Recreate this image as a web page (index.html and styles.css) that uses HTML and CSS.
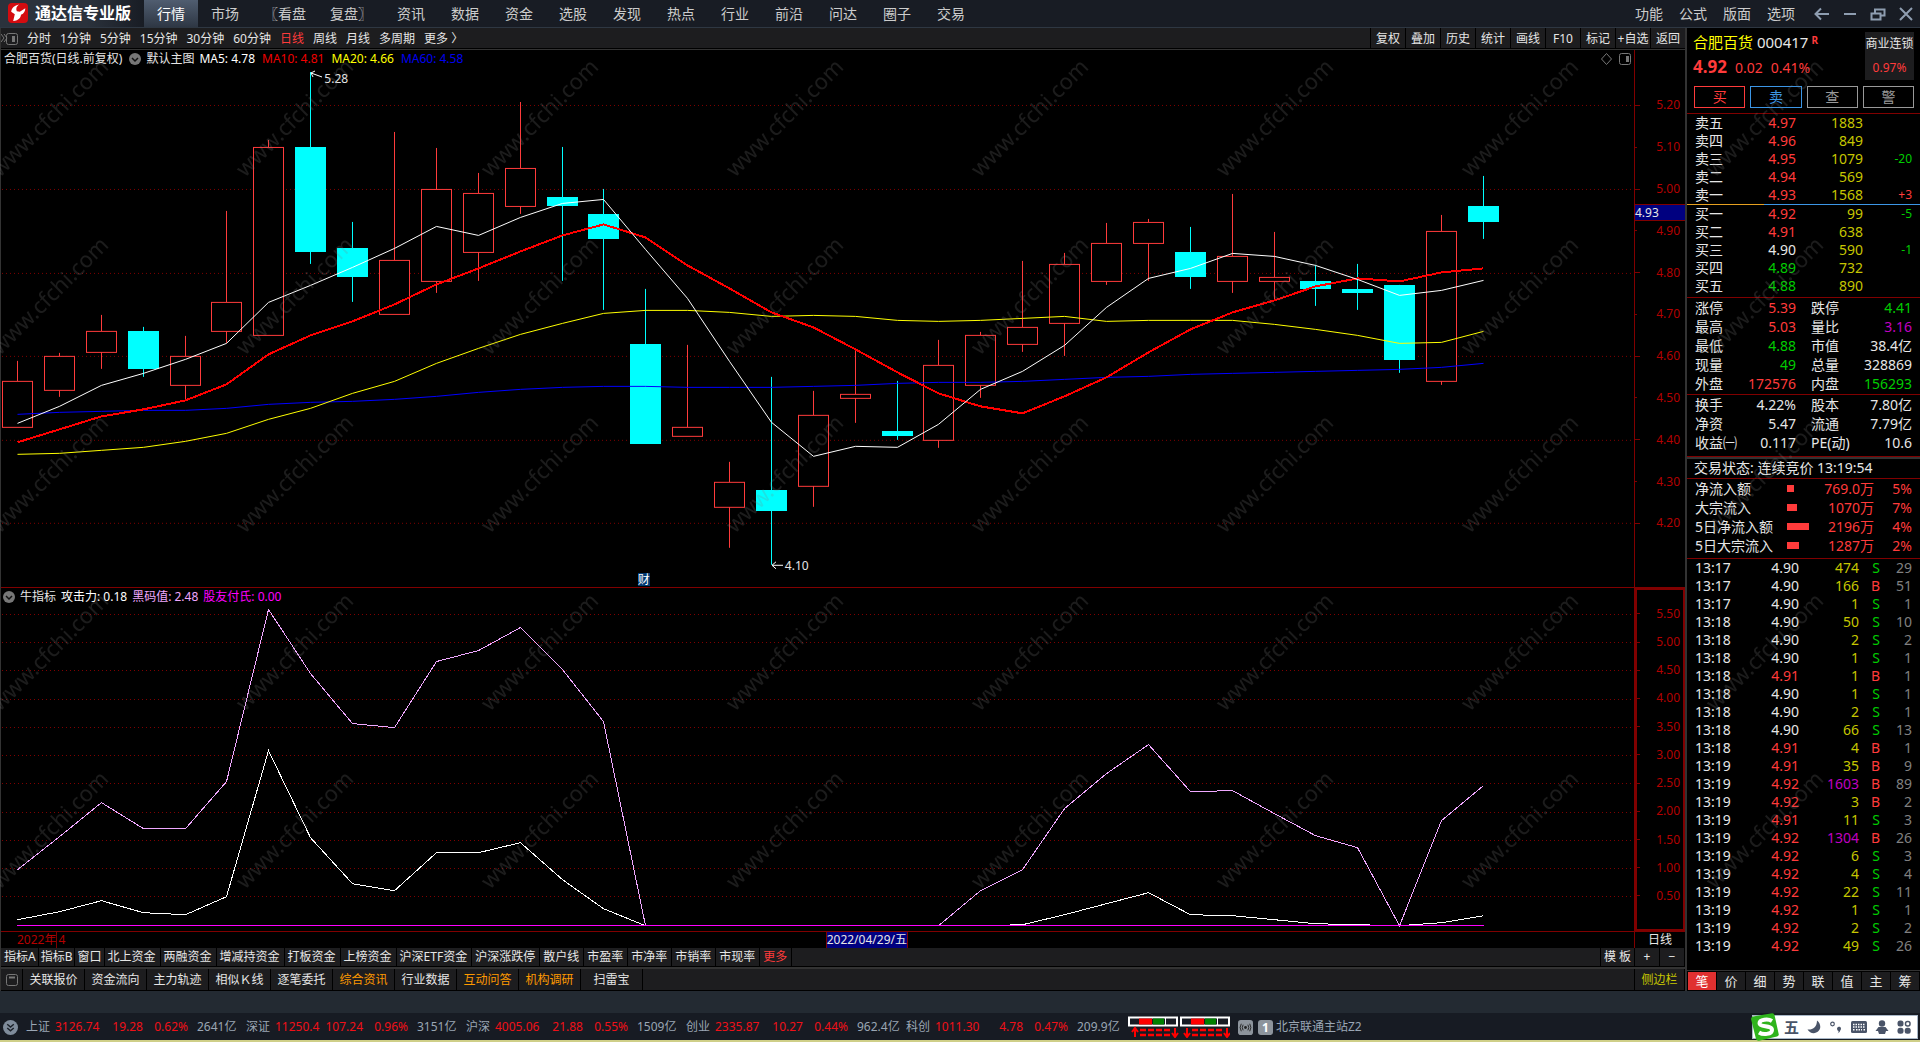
FILE: index.html
```html
<!DOCTYPE html>
<html lang="zh-CN">
<head>
<meta charset="utf-8">
<title>通达信专业版</title>
<link rel="stylesheet" href="styles.css">
</head>
<body>
<header class="topbar">
  <div class="brand">
    <svg class="brand-logo" viewBox="0 0 20 20"><rect width="20" height="20" rx="4" fill="#d40c10"/><path d="M11 1.500C6.500 2.500 3.500 5 3.200 8.800L6.800 11.200L5.200 18C8.500 18.300 12.500 16 13 11.800C16 10.500 17.400 8 17.300 5.200L11.800 8.700L8.800 8.200C7.600 5.500 8.600 3.200 11 1.500Z" fill="#fff"/></svg>
    <h1>通达信专业版</h1>
  </div>
  <nav class="menu">
    <button class="active">行情</button><button>市场</button><button class="wide">〖看盘</button><button class="wide">复盘〗</button><button>资讯</button><button>数据</button><button>资金</button><button>选股</button><button>发现</button><button>热点</button><button>行业</button><button>前沿</button><button>问达</button><button>圈子</button><button>交易</button>
  </nav>
  <nav class="menu-right">
    <button>功能</button><button>公式</button><button>版面</button><button>选项</button>
  </nav>
  <div class="window-buttons">
    <button aria-label="返回"><svg viewBox="0 0 16 16"><path d="M15 8H1.500M7 2.500L1.500 8L7 13.500"/></svg></button>
    <button aria-label="最小化"><svg viewBox="0 0 16 16"><path d="M2 8H14"/></svg></button>
    <button aria-label="还原"><svg viewBox="0 0 16 16"><path d="M1.500 7.500H10.500V13.500H1.500ZM5 7V3.500H14.500V9.500H11"/></svg></button>
    <button aria-label="关闭"><svg viewBox="0 0 16 16"><path d="M2 2L14 14M14 2L2 14"/></svg></button>
  </div>
</header>

<main class="workspace">
  <section class="chart-area">
    <div class="toolbar">
      <svg class="fold-icon" viewBox="0 0 18 14"><path d="M0 2L3 6L0 10M3 2L6 6L3 10" /><rect x="5.500" y="1.500" width="11" height="11" rx="2"/><path d="M12.500 4V10" stroke-width="3"/></svg>
      <div class="periods">
        <button>分时</button><button>1分钟</button><button>5分钟</button><button>15分钟</button><button>30分钟</button><button>60分钟</button><button class="active">日线</button><button>周线</button><button>月线</button><button>多周期</button><button>更多 〉</button>
      </div>
      <div class="tools">
        <button>复权</button><button>叠加</button><button>历史</button><button>统计</button><button>画线</button><button>F10</button><button>标记</button><button>+自选</button><button>返回</button>
      </div>
    </div>

    <div class="pane price-pane">
      <div class="plot">
        <svg id="price" viewBox="1 50 1633 537" preserveAspectRatio="none"></svg>
        <div class="legend">
          <span>合肥百货(日线.前复权)</span>
          <svg class="drop" viewBox="0 0 12 12"><circle cx="6" cy="6" r="6" fill="#777"/><path d="M3 5L6 8L9 5" fill="none" stroke="#111" stroke-width="1.500"/></svg>
          <span>默认主图</span><span class="ma5">MA5: 4.78</span><span class="ma10">MA10: 4.81</span><span class="ma20">MA20: 4.66</span><span class="ma60">MA60: 4.58</span>
        </div>
        <svg class="corner" viewBox="0 0 32 14"><path d="M6.500 1.500L11.500 7L6.500 12.500L1.500 7Z"/><rect x="19.500" y="1.500" width="11" height="11" rx="2"/><path d="M27.500 4V10" stroke-width="3"/></svg>
        <span class="note high">5.28</span>
        <span class="note low">4.10</span>
        <span class="event">财</span>
      </div>
      <ol class="axis price-axis">
        <li>5.20</li><li>5.10</li><li>5.00</li><li>4.90</li><li>4.80</li><li>4.70</li><li>4.60</li><li>4.50</li><li>4.40</li><li>4.30</li><li>4.20</li>
      </ol>
      <span class="cursor-price">4.93</span>
    </div>

    <div class="pane index-pane">
      <div class="plot">
        <svg id="index" viewBox="1 588 1633 343" preserveAspectRatio="none"></svg>
        <div class="legend">
          <svg class="drop" viewBox="0 0 12 12"><circle cx="6" cy="6" r="6" fill="#777"/><path d="M3 5L6 8L9 5" fill="none" stroke="#111" stroke-width="1.500"/></svg>
          <span>牛指标</span><span class="ma5">攻击力: 0.18</span><span class="pink">黑码值: 2.48</span><span class="magenta">股友付氏: 0.00</span>
        </div>
      </div>
      <ol class="axis index-axis">
        <li>5.50</li><li>5.00</li><li>4.50</li><li>4.00</li><li>3.50</li><li>3.00</li><li>2.50</li><li>2.00</li><li>1.50</li><li>1.00</li><li>0.50</li>
      </ol>
    </div>

    <div class="dates">
      <div class="date-track"><span class="year">2022年</span><span class="month">4</span><span class="cursor-date">2022/04/29/五</span></div>
      <span class="period">日线</span>
    </div>

    <div class="tabs indicators">
      <button class="tight">指标A</button><button class="tight">指标B</button><button class="tight">窗口</button><button>北上资金</button><button>两融资金</button><button>增减持资金</button><button>打板资金</button><button>上榜资金</button><button>沪深ETF资金</button><button>沪深涨跌停</button><button>散户线</button><button>市盈率</button><button>市净率</button><button>市销率</button><button>市现率</button><button class="active">更多</button>
      <button class="push">模 板</button><button class="zoom">+</button><button class="zoom">−</button>
    </div>
    <div class="tabs links">
      <button class="panel-toggle" aria-label="面板"><svg viewBox="0 0 12 12"><rect x=".5" y=".5" width="11" height="11" rx="2"/><path d="M3 3.500H9" stroke-width="2"/></svg></button><button>关联报价</button><button>资金流向</button><button>主力轨迹</button><button>相似Ｋ线</button><button>逐笔委托</button><button class="hot">综合资讯</button><button>行业数据</button><button class="hot">互动问答</button><button class="hot">机构调研</button><button>扫雷宝</button>
      <button class="push side">侧边栏</button>
    </div>
  </section>

  <aside class="quote">
    <div class="quote-head">
      <div>
        <h2><span class="name">合肥百货</span> 000417<sup>R</sup></h2>
        <p class="last"><strong>4.92</strong><span>0.02</span><span>0.41%</span></p>
      </div>
      <div class="sector"><span>商业连锁</span><span class="up">0.97%</span></div>
    </div>
    <div class="actions"><button class="buy">买</button><button class="sell">卖</button><button>查</button><button>警</button></div>

    <table class="book asks">
      <tr><th>卖五</th><td class="up">4.97</td><td class="vol">1883</td><td></td></tr>
      <tr><th>卖四</th><td class="up">4.96</td><td class="vol">849</td><td></td></tr>
      <tr><th>卖三</th><td class="up">4.95</td><td class="vol">1079</td><td class="down">-20</td></tr>
      <tr><th>卖二</th><td class="up">4.94</td><td class="vol">569</td><td></td></tr>
      <tr><th>卖一</th><td class="up">4.93</td><td class="vol">1568</td><td class="up">+3</td></tr>
    </table>
    <table class="book bids">
      <tr><th>买一</th><td class="up">4.92</td><td class="vol">99</td><td class="down">-5</td></tr>
      <tr><th>买二</th><td class="up">4.91</td><td class="vol">638</td><td></td></tr>
      <tr><th>买三</th><td>4.90</td><td class="vol">590</td><td class="down">-1</td></tr>
      <tr><th>买四</th><td class="down">4.89</td><td class="vol">732</td><td></td></tr>
      <tr><th>买五</th><td class="down">4.88</td><td class="vol">890</td><td></td></tr>
    </table>
    <table class="facts prices">
      <tr><th>涨停</th><td class="up">5.39</td><th>跌停</th><td class="down">4.41</td></tr>
      <tr><th>最高</th><td class="up">5.03</td><th>量比</th><td class="big">3.16</td></tr>
      <tr><th>最低</th><td class="down">4.88</td><th>市值</th><td>38.4亿</td></tr>
      <tr><th>现量</th><td class="down">49</td><th>总量</th><td>328869</td></tr>
      <tr><th>外盘</th><td class="up">172576</td><th>内盘</th><td class="down">156293</td></tr>
    </table>
    <table class="facts company">
      <tr><th>换手</th><td>4.22%</td><th>股本</th><td>7.80亿</td></tr>
      <tr><th>净资</th><td>5.47</td><th>流通</th><td>7.79亿</td></tr>
      <tr><th>收益㈠</th><td>0.117</td><th>PE(动)</th><td>10.6</td></tr>
    </table>
    <p class="state">交易状态: 连续竞价 13:19:54</p>
    <table class="flows">
      <tr><th>净流入额</th><td><i class="bar" style="width:7px"></i></td><td>769.0万</td><td>5%</td></tr>
      <tr><th>大宗流入</th><td><i class="bar" style="width:10px"></i></td><td>1070万</td><td>7%</td></tr>
      <tr><th>5日净流入额</th><td><i class="bar" style="width:22px"></i></td><td>2196万</td><td>4%</td></tr>
      <tr><th>5日大宗流入</th><td><i class="bar" style="width:12px"></i></td><td>1287万</td><td>2%</td></tr>
    </table>
    <table class="ticks">
      <tr><th>13:17</th><td>4.90</td><td class="vol">474</td><td class="down">S</td><td>29</td></tr>
      <tr><th>13:17</th><td>4.90</td><td class="vol">166</td><td class="up">B</td><td>51</td></tr>
      <tr><th>13:17</th><td>4.90</td><td class="vol">1</td><td class="down">S</td><td>1</td></tr>
      <tr><th>13:18</th><td>4.90</td><td class="vol">50</td><td class="down">S</td><td>10</td></tr>
      <tr><th>13:18</th><td>4.90</td><td class="vol">2</td><td class="down">S</td><td>2</td></tr>
      <tr><th>13:18</th><td>4.90</td><td class="vol">1</td><td class="down">S</td><td>1</td></tr>
      <tr><th>13:18</th><td class="up">4.91</td><td class="vol">1</td><td class="up">B</td><td>1</td></tr>
      <tr><th>13:18</th><td>4.90</td><td class="vol">1</td><td class="down">S</td><td>1</td></tr>
      <tr><th>13:18</th><td>4.90</td><td class="vol">2</td><td class="down">S</td><td>1</td></tr>
      <tr><th>13:18</th><td>4.90</td><td class="vol">66</td><td class="down">S</td><td>13</td></tr>
      <tr><th>13:18</th><td class="up">4.91</td><td class="vol">4</td><td class="up">B</td><td>1</td></tr>
      <tr><th>13:19</th><td class="up">4.91</td><td class="vol">35</td><td class="up">B</td><td>9</td></tr>
      <tr><th>13:19</th><td class="up">4.92</td><td class="big">1603</td><td class="up">B</td><td>89</td></tr>
      <tr><th>13:19</th><td class="up">4.92</td><td class="vol">3</td><td class="up">B</td><td>2</td></tr>
      <tr><th>13:19</th><td class="up">4.91</td><td class="vol">11</td><td class="down">S</td><td>3</td></tr>
      <tr><th>13:19</th><td class="up">4.92</td><td class="big">1304</td><td class="up">B</td><td>26</td></tr>
      <tr><th>13:19</th><td class="up">4.92</td><td class="vol">6</td><td class="down">S</td><td>3</td></tr>
      <tr><th>13:19</th><td class="up">4.92</td><td class="vol">4</td><td class="down">S</td><td>4</td></tr>
      <tr><th>13:19</th><td class="up">4.92</td><td class="vol">22</td><td class="down">S</td><td>11</td></tr>
      <tr><th>13:19</th><td class="up">4.92</td><td class="vol">1</td><td class="down">S</td><td>1</td></tr>
      <tr><th>13:19</th><td class="up">4.92</td><td class="vol">2</td><td class="down">S</td><td>2</td></tr>
      <tr><th>13:19</th><td class="up">4.92</td><td class="vol">49</td><td class="down">S</td><td>26</td></tr>
    </table>
    <nav class="quote-tabs"><button class="active">笔</button><button>价</button><button>细</button><button>势</button><button>联</button><button>值</button><button>主</button><button>筹</button></nav>
  </aside>

  <svg class="watermark" aria-hidden="true">
    <defs><pattern id="mark" x="-14" y="28" width="245" height="178" patternUnits="userSpaceOnUse"><text x="14" y="122" transform="rotate(-45 14 122)">www.cfchi.com</text></pattern></defs>
    <rect width="100%" height="100%" fill="url(#mark)"/>
  </svg>
</main>

<footer class="status">
  <svg class="expand" viewBox="0 0 16 16"><circle cx="8" cy="8" r="8" fill="#7f8c9b"/><path d="M4.500 4.500L8 7.500L11.500 4.500M4.500 8.500L8 11.500L11.500 8.500" fill="none" stroke="#1a2028" stroke-width="1.500"/></svg>
  <div class="market"><span>上证</span><b>3126.74</b><b>19.28</b><b>0.62%</b><span>2641亿</span></div>
  <div class="market"><span>深证</span><b>11250.4</b><b>107.24</b><b>0.96%</b><span>3151亿</span></div>
  <div class="market"><span>沪深</span><b>4005.06</b><b>21.88</b><b>0.55%</b><span>1509亿</span></div>
  <div class="market"><span>创业</span><b>2335.87</b><b>10.27</b><b>0.44%</b><span>962.4亿</span></div>
  <div class="market"><span>科创</span><b>1011.30</b><b>4.78</b><b>0.47%</b><span>209.9亿</span></div>
  <svg class="breadth" viewBox="0 0 102 22">
    <g id="meter"><rect x="1" y="1.500" width="48" height="8" fill="none" stroke="#fff" stroke-width="2"/><path d="M11 2.500H24V8.500H11Z" fill="#f00"/><path d="M25 2.500H36V8.500H25Z" fill="green"/><path d="M37.500 1V10" stroke="#fff"/></g>
    <use href="#meter" x="52"/>
    <path d="M7 21V13M4 16L7 12L10 16M47 12V19M44 17L47 21L50 17M59 12V19M56 17L59 21L62 17M99 12V19M96 17L99 21L102 17" stroke="#f00" stroke-width="2" fill="none"/>
    <path d="M12 14H42M12 19H42M64 14H94M64 19H94" stroke="#f00" stroke-width="2.500" stroke-dasharray="6 2"/>
  </svg>
  <svg class="chip" viewBox="0 0 16 16"><rect width="16" height="16" rx="3" fill="#8d949c"/><circle cx="8" cy="8" r="1.500" fill="#222"/><path d="M5.500 5Q3.500 8 5.500 11M10.500 5Q12.500 8 10.500 11M3.500 4Q1 8 3.500 12M12.500 4Q15 8 12.500 12" stroke="#222" fill="none"/></svg>
  <span class="site-no">1</span><span class="site">北京联通主站Z2</span>
  <div class="ime">
    <svg class="sogou" viewBox="0 0 28 28"><path d="M0 6Q0 4 2 3.500L21 .2Q23 0 23.500 2L27.700 21Q28 23 26 23.500L8 27.800Q5.500 28 5 26Z" fill="#2fb41c"/><path d="M21 8C17 5.500 8.500 6.500 8.500 10.200C8.500 14.500 21 12 21 17C21 21.500 12 22 8 19.500" fill="none" stroke="#fff" stroke-width="4"/></svg>
    <span>五</span>
    <svg viewBox="0 0 14 14"><path d="M10 .5C10 7 6 10 .5 9.500C3 13.500 8 14.500 11.500 11C14.500 8 13.500 3 10 .5Z"/></svg>
    <svg viewBox="0 0 14 14"><circle cx="3.500" cy="4" r="1.800" fill="none" stroke="#4a5468" stroke-width="1.200"/><path d="M8 8.500A2 2 0 1 1 11.500 10Q11 12.500 8.500 13.500Q10 12 9.500 11Q8 10.500 8 8.500Z"/></svg>
    <svg class="keys" viewBox="0 0 16 12"><rect width="16" height="12" rx="1.500"/><path d="M2 3.500H14M2 6H14M2 8.800H3.500M5 8.800H11M12.500 8.800H14" stroke="#fff" stroke-width="1.500" stroke-dasharray="1.500 1"/></svg>
    <svg viewBox="0 0 14 14"><circle cx="7" cy="3.500" r="3.200"/><path d="M3.500 7H10.500L13.500 11H11L10 14H4L3 11H.5Z"/></svg>
    <svg viewBox="0 0 14 14"><rect x=".5" y=".5" width="6" height="6" rx="2.500"/><rect x="8.500" y="1.500" width="4.500" height="4.500" rx="2" fill="none" stroke="#4a5468" stroke-width="1.500"/><rect x=".5" y="7.700" width="6" height="6" rx="2.500"/><rect x="7.700" y="7.700" width="6" height="6" rx="2.500"/></svg>
  </div>
</footer>
<script src="charts.js"></script>
</body>
</html>
```
FILE: styles.css
```css
* { box-sizing: border-box; }
body {
  margin: 0;
  min-height: 100vh;
  display: flex;
  flex-direction: column;
  background: #000;
  color: #e6e6e6;
  font: 12px/16px "Noto Sans", "Noto Sans CJK SC", sans-serif;
}
button {
  margin: 0;
  padding: 0;
  border: 0;
  background: none;
  color: inherit;
  font: inherit;
  white-space: nowrap;
}
h1, h2, p, ol { margin: 0; padding: 0; }
table { border-collapse: separate; border-spacing: 0; table-layout: fixed; width: 100%; }
th, td { padding: 0; font-weight: 400; white-space: nowrap; }
th { text-align: left; }
td { text-align: right; }

.up { color: #ff3b3b; }
.down { color: #00cc00; }
.vol { color: #c6c600; }
.big { color: #c000c0; }

/* top bar */
.topbar {
  display: flex;
  height: 28px;
  background: #181c24;
  border-bottom: 1px solid #2e3742;
  font-size: 14px;
  line-height: 27px;
  color: #ccc;
}
.brand {
  width: 144px;
  display: flex;
  align-items: center;
  gap: 7px;
  padding: 0 0 2px 8px;
  background: linear-gradient(90deg, #2b323c, #2b323c 60%, #181c24);
}
.brand-logo { width: 20px; height: 20px; }
.brand h1 { font-size: 16px; line-height: 24px; color: #fff; white-space: nowrap; }
.menu { display: flex; }
.menu button { width: 54px; }
.menu .wide { width: 66px; }
.menu .active { background: linear-gradient(#505d70, #2e3744); color: #fff; }
.menu-right { display: flex; gap: 16px; margin-left: auto; }
.window-buttons { display: flex; gap: 12px; align-items: center; padding: 0 6px 0 19px; }
.window-buttons button { width: 16px; height: 16px; }
.window-buttons svg { display: block; fill: none; stroke: #8e9db0; stroke-width: 2; }

/* workspace */
.workspace {
  position: relative;
  flex: 1;
  display: grid;
  grid-template-columns: minmax(0, 1fr) 235px;
}
.chart-area { display: flex; flex-direction: column; border-left: 1px solid #333; }
.toolbar {
  display: flex;
  align-items: stretch;
  height: 22px;
  padding-bottom: 1px;
  background: linear-gradient(#1d1d1f, #1d1d1f) 0 0 / 100% 20px no-repeat;
  border-bottom: 1px solid #333;
  line-height: 21px;
}
.fold-icon { width: 18px; height: 14px; margin-top: 4px; fill: none; stroke: #777; }
.periods { display: flex; gap: 9px; margin-left: 8px; }
.periods .active { color: #ff3b3b; }
.tools { display: flex; margin-left: auto; }
.tools button { width: 35px; border-left: 1px solid #000; overflow: hidden; }

.pane {
  position: relative;
  display: grid;
  grid-template-columns: minmax(0, 1fr) 51px;
  border-bottom: 1px solid #800000;
  min-height: 200px;
}
.price-pane { flex: 538 1 0; }
.index-pane { flex: 344 1 0; }
.plot { position: relative; }
.plot > svg:first-child { position: absolute; width: 100%; height: 100%; shape-rendering: crispEdges; }
.legend { position: absolute; left: 3px; top: 1px; display: flex; align-items: center; gap: 5px; white-space: nowrap; }
.index-pane .legend { left: 2px; }
.drop { width: 12px; height: 12px; }
.price-pane .drop { margin-left: 2px; }
.ma5 { color: #fff; }
.ma10 { color: #f00000; }
.ma20 { color: #ff0; }
.ma60 { color: #0000f0; }
.ma10, .ma20, .ma60 { margin-left: 2px; }
.pink { color: #f0a8ff; }
.magenta { color: #f0f; }
.corner { position: absolute; right: 2px; top: 2px; width: 32px; height: 14px; fill: none; stroke: #777; }
.note { position: absolute; }
.high { left: 19.800%; top: 21px; }
.low { left: 48%; bottom: 13px; }
.event { position: absolute; left: 39%; bottom: 1px; line-height: 13px; background: #003870; color: #fff; }

.axis { display: grid; list-style: none; border-left: 1px solid #800000; color: #b40000; }
.axis::before { content: ""; }
.axis li {
  position: relative;
  display: flex;
  align-items: center;
  justify-content: flex-end;
  padding-right: 5px;
  min-height: 0;
  line-height: 12px;
}
.axis li::before { content: ""; position: absolute; left: 0; width: 5px; height: 1px; background: #800000; }
.price-axis { grid-template-rows: 346fr repeat(11, 418fr) 426fr; }
.price-axis li:nth-child(even)::before { width: 2px; }
.index-axis { grid-template-rows: 119fr repeat(11, 282fr) 209fr; box-shadow: inset 0 0 0 2px #800000; }
.cursor-price {
  position: absolute;
  right: 0;
  top: 154px;
  width: 50px;
  background: #000080;
  border: solid #800000;
  border-width: 1px 0;
  line-height: 15px;
}

.dates { display: grid; grid-template-columns: minmax(0, 1fr) 51px; height: 16px; }
.date-track { position: relative; display: flex; color: #b40000; padding-left: 16px; }
.month { border-left: 1px solid #800000; padding-left: 1px; }
.cursor-date { position: absolute; left: 50.500%; top: 0; background: #000080; color: #e6e6e6; border: solid #800000; border-width: 0 1px; }
.period { border-left: 1px solid #800000; padding-left: 13px; }

.tabs { display: flex; background: #1d1d1f; padding-left: 1px; overflow: hidden; }
.tabs button { border-right: 1px solid #000; flex: none; }
.indicators { height: 19px; line-height: 18px; border-bottom: 1px solid #000; }
.indicators button { padding: 0 4px 0 3px; }
.indicators .tight { padding: 0 2px; }
.indicators .active { color: #ff3b3b; }
.indicators .zoom { width: 25px; padding: 0; }
.links { height: 24px; line-height: 20px; border-top: 2px solid #333; border-bottom: 1px solid #000; }
.links button { width: 62px; }
.links .panel-toggle { width: 21px; }
.panel-toggle svg { display: block; width: 12px; height: 12px; margin: auto; fill: none; stroke: #777; }
.links .hot { color: #ff9a00; }
.links .side { width: 51px; color: #c6c600; }
.tabs .push { margin-left: auto; border-left: 1px solid #000; padding: 0 3px; }

/* quote panel */
.quote { border-left: 2px solid #333; display: flex; flex-direction: column; font-size: 14px; line-height: 18px; padding-bottom: 1px; }
.quote-head { display: flex; justify-content: space-between; padding: 4px 6px 0 6px; height: 58px; }
.quote h2 { font-size: 15px; line-height: 20px; font-weight: 400; white-space: nowrap; }
.name { color: #ff0; }
.quote sup { margin-left: 3px; color: #ff3b3b; font-size: 10px; font-weight: 700; line-height: 10px; vertical-align: 4px; }
.last { display: flex; align-items: baseline; gap: 8px; color: #ff3b3b; line-height: 30px; }
.last strong { font-size: 17px; }
.sector { width: 49px; height: 48px; background: #1d1d1f; font-size: 12px; display: flex; flex-direction: column; align-items: center; justify-content: space-between; line-height: 24px; white-space: nowrap; }
.actions { display: flex; gap: 5px; padding: 0 6px 5px 7px; }
.actions button { flex: 1; height: 22px; border: 1px solid #999; color: #999; line-height: 20px; }
.actions .buy { border-color: #ff3b3b; color: #ff3b3b; }
.actions .sell { border-color: #3c96e6; color: #3c96e6; }

.asks, .facts, .flows, .ticks { border-top: 1px solid #800000; }
.quote tr > :first-child { padding-left: 8px; }
.quote tr > :last-child { padding-right: 8px; }
.quote tr { height: 18px; }
.book th { width: 48px; }
.book td:nth-child(2) { width: 61px; }
.book td:nth-child(3) { width: 67px; }
.book td:last-child { font-size: 12px; }
.bids { padding-top: 1px; margin-bottom: 2px; background: linear-gradient(90deg, #e6a020 33%, #3c96e6 33%) 0 0 / 100% 1px no-repeat; }
.facts tr, .flows tr { height: 19px; }
.facts th:nth-child(1) { width: 56px; }
.facts td:nth-child(2) { width: 53px; }
.facts th:nth-child(3) { padding-left: 15px; width: 64px; }
.prices { margin-bottom: 1px; }
.company { margin-bottom: 4px; }
.state {
  height: 22px;
  padding: 2px 0 0 7px;
  border-top: 1px solid #800000;
  box-shadow: inset 0 2px #333;
  white-space: nowrap;
}
.flows th { width: 100px; }
.flows td { color: #ff3b3b; }
.flows td:nth-child(2) { width: 26px; text-align: left; }
.flows td:nth-child(3) { width: 61px; }
.flows { margin-bottom: 3px; }
.bar { display: block; height: 7px; background: #ff3b3b; }
.ticks th { width: 60px; }
.ticks td:nth-child(2) { width: 52px; }
.ticks td:nth-child(3) { width: 60px; }
.ticks td:nth-child(4) { width: 21px; }
.ticks td:last-child { color: #808080; }
.quote-tabs { display: flex; gap: 1px; margin-top: auto; border-top: 1px solid #333; padding: 1px 1px 0; }
.quote-tabs button { flex: 1; background: #1d1d1f; font-size: 13px; }
.quote-tabs .active { background: #e03030; color: #fff; }

.watermark { position: absolute; left: 0; top: 0; width: 100%; height: calc(100% - 70px); pointer-events: none; }
.watermark text { font: 22px "Noto Sans", sans-serif; fill: rgba(128, 128, 128, .22); }

/* status bar */
.status {
  display: flex;
  align-items: center;
  height: 51px;
  padding: 23px 2px 0 3px;
  border-bottom: 2px solid #cfcf88;
  background: linear-gradient(#232a32, #232a32) 0 0 / 100% 22px no-repeat #171b23;
  color: #9aa6b4;
  white-space: nowrap;
}
.expand { width: 15px; height: 15px; margin-right: 8px; flex: none; }
.market { display: grid; grid-template-columns: 29px 44px 44px 45px 58px; text-align: right; flex: none; }
.market b { font-weight: 400; color: #f01018; }
.market span:first-child { text-align: left; }
.market span:last-child { text-align: left; padding-left: 9px; }
.breadth { width: 102px; height: 22px; margin-left: 2px; flex: none; }
.chip { width: 15px; height: 15px; margin-left: 8px; flex: none; }
.site-no { width: 15px; height: 15px; margin: 0 3px 0 5px; border-radius: 3px; background: #8d949c; color: #fff; text-align: center; font-weight: 700; line-height: 15px; }
.ime {
  margin-left: auto;
  display: flex;
  align-items: center;
  gap: 8px;
  height: 24px;
  padding-right: 6px;
  background: #fff;
  border: 1px solid #a9b8c8;
  color: #4a5468;
  font-size: 15px;
  font-weight: 700;
}
.ime svg { width: 14px; height: 14px; fill: #4a5468; flex: none; }
.ime .keys { width: 16px; height: 12px; }
.ime .sogou { width: 28px; height: 28px; margin: 0 -3px 0 -2px; }
```
FILE: charts.js
```js
// [body top, body bottom, wick top, wick bottom, falling]
const candles = [
  [381,427,361,427,0],[356,390,353,397,0],[331,352,315,369,0],[331,369,327,377,1],[356,385,336,400,0],[302,331,211,343,0],
  [147,335,140,335,0],[147,252,72,264,1],[248,277,222,302,1],[260,314,132,314,0],[189,281,148,293,0],[193,252,173,281,0],
  [168,206,102,214,0],[197,206,147,281,1],[214,239,189,310,1],[344,444,289,444,1],[427,436,345,436,0],[482,507,462,548,0],
  [490,511,377,565,1],[415,486,391,507,0],[394,398,349,423,0],[431,436,381,440,1],[365,440,340,448,0],[335,385,332,398,0],
  [327,344,261,352,0],[264,323,253,356,0],[243,281,223,285,0],[222,243,219,281,0],[252,277,227,289,1],[256,281,194,293,0],
  [277,281,232,300,0],[281,289,265,306,1],[289,293,264,310,1],[285,360,285,373,1],[231,381,215,385,0],[206,222,176,239,1]
];
const ma5 = [423,406,385,373,359,343,302,285,267,248,226,235,217,203,199,249,298,361,422,456,446,447,424,389,371,345,307,278,268,253,256,265,279,295,290,280];
const ma10 = [442,429,416,409,400,384,354,335,321,304,284,268,251,235,224,237,265,288,312,327,349,372,393,406,413,396,377,352,329,312,300,286,278,281,272,268];
const ma20 = [454,453,450,447,441,433,419,408,393,381,363,348,334,323,313,310,310,312,316,315,316,320,321,320,318,316,321,320,320,320,324,329,335,343,342,331];
const ma60 = [414,412,411,410,410,408,404,402,401,399,396,392,389,387,386,386,387,387,387,386,385,383,382,382,381,379,377,376,374,373,372,371,370,369,367,363];
const code = [869,836,802,828,828,781,609,673,723,727,661,650,627,669,721,925,925,925,925,925,925,925,925,890,869,808,773,744,791,790,813,835,847,925,820,785];
const power = [919,911,900,912,914,896,750,837,883,890,852,852,842,879,908,925,925,925,925,925,925,925,925,925,924,914,903,892,914,915,919,923,924,925,922,915];

const x = k => Math.round(17 + 41.886 * k);
const line = (ys, color, width = 1) =>
  `<polyline fill="none" stroke="${color}" stroke-width="${width}" points="${ys.map((y, k) => `${x(k) + .5},${y + .5}`).join(' ')}"/>`;
const grid = ys => ys.map(y => `<path d="M2 ${y + .5}H1634" stroke="#800000" stroke-dasharray="1 3"/>`).join('');

const candle = ([top, bottom, high, low, falling], k) => {
  const c = x(k), color = falling ? '#00ffff' : '#ff3b3b';
  const wick = `<path d="M${c + .5} ${high}V${low}" stroke="${color}"/>`;
  return wick + (falling
    ? `<rect x="${c - 15}" y="${top}" width="31" height="${bottom - top}" fill="${color}"/>`
    : `<rect x="${c - 14.5}" y="${top + .5}" width="30" height="${bottom - top}" fill="#000" stroke="${color}"/>`);
};

document.getElementById('price').innerHTML =
  grid([105, 189, 273, 356, 440, 523]) + candles.map(candle).join('') +
  line(ma60, '#0000ff') + line(ma20, '#ffff00') + line(ma10, '#ff0000', 2) + line(ma5, '#ffffff') +
  '<path d="M322 77L311 73M315 71L311 73L313 77M783 565.500H772M776 562L772 565.500L776 569" fill="none" stroke="#fff"/>';

document.getElementById('index').innerHTML =
  grid([614, 642, 670, 699, 727, 755, 783, 812, 840, 868, 896]) +
  line(code, '#f0a8ff') + line(power, '#ffffff') +
  '<path d="M17 925.500H1484" stroke="#ff00ff"/>';
```
